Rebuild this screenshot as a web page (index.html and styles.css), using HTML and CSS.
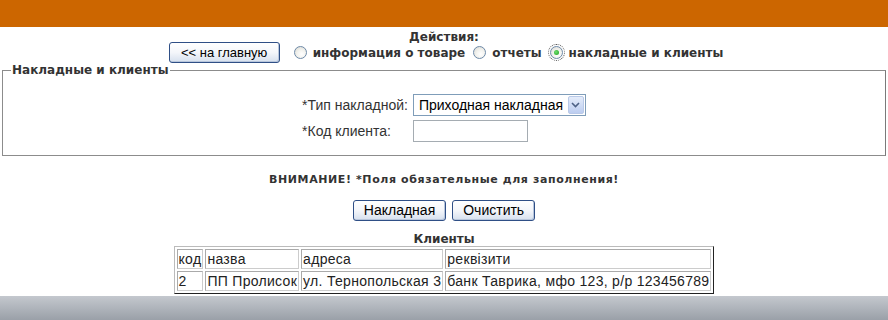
FILE: index.html
```html
<!DOCTYPE html>
<html lang="ru">
<head>
<meta charset="utf-8">
<title>Накладные и клиенты</title>
<link rel="stylesheet" href="styles.css">
</head>
<body>
<div class="page">
  <div class="header"></div>
  <div class="actions">
    <div class="actions-title">Действия:</div>
    <div class="actions-row">
      <button class="btn btn-home" type="button">&lt;&lt; на главную</button>
      <label class="radio-item"><span class="radio"></span>информация о товаре</label>
      <label class="radio-item"><span class="radio"></span>отчеты</label>
      <label class="radio-item"><span class="radio radio-on"></span>накладные и клиенты</label>
    </div>
  </div>
  <fieldset class="box">
    <legend class="box-legend">Накладные и клиенты</legend>
    <div class="form-grid">
      <span class="form-label">*Тип накладной:</span>
      <div class="select-wrap">
        <select class="select">
          <option>Приходная накладная</option>
        </select>
        <span class="select-btn">
          <svg width="9" height="6" viewBox="0 0 9 6"><path d="M1 1 L4.5 4.5 L8 1" fill="none" stroke="#4d6185" stroke-width="1.6"/></svg>
        </span>
      </div>
      <span class="form-label">*Код клиента:</span>
      <div><input class="text-input" type="text"></div>
    </div>
  </fieldset>
  <div class="warning">ВНИМАНИЕ! *Поля обязательные для заполнения!</div>
  <div class="buttons">
    <button class="btn btn-form" type="button">Накладная</button>
    <button class="btn btn-form" type="button">Очистить</button>
  </div>
  <div class="clients">
    <div class="clients-title">Клиенты</div>
    <table class="clients-table">
      <tr><td>код</td><td>назва</td><td>адреса</td><td>реквізити</td></tr>
      <tr><td>2</td><td>ПП Пролисок</td><td>ул. Тернопольская 3</td><td>банк Таврика, мфо 123, р/р 123456789</td></tr>
    </table>
  </div>
  <div class="footer"></div>
</div>
</body>
</html>
```

FILE: styles.css
```css
html, body {
  margin: 0;
  padding: 0;
  background: #fff;
}
body {
  font-family: "DejaVu Sans", Verdana, sans-serif;
  color: #333;
  height: 320px;
  overflow: hidden;
}
.page {
  display: flex;
  flex-direction: column;
  height: 320px;
}
.header {
  height: 27px;
  background: #cc6600;
  flex: none;
}
.actions {
  display: flex;
  flex-direction: column;
  align-items: center;
  padding-top: 4px;
}
.actions-title {
  font-size: 12px;
  font-weight: bold;
  line-height: 13px;
  color: #333;
}
.actions-row {
  display: flex;
  align-items: center;
  margin-top: -2px;
  padding-left: 12px;
}
.btn {
  font-family: "Liberation Sans", Arial, sans-serif;
  font-size: 13px;
  color: #000;
  border: 1px solid #2f4f86;
  border-radius: 3px;
  background: linear-gradient(#ffffff 0%, #f4f6fa 50%, #d6e0ee 100%);
  padding: 0;
  height: 21px;
  line-height: 19px;
  box-shadow: inset -1px -1px 0 #b8c6dc;
}
.btn-home {
  width: 111px;
  margin-right: 14px;
}
.radio-item {
  display: flex;
  align-items: center;
  font-size: 12px;
  font-weight: bold;
  color: #333;
  margin-right: 8px;
}
.radio {
  width: 11px;
  height: 11px;
  border-radius: 50%;
  border: 1px solid #6e8aa8;
  background: radial-gradient(circle at 60% 65%, #ffffff 0%, #f2f2ee 45%, #d6d6d0 100%);
  margin-right: 6px;
  flex: none;
  display: flex;
  align-items: center;
  justify-content: center;
}
.radio-on {
  outline: 1px dotted #555;
  outline-offset: 1px;
}
.radio-on::after {
  content: "";
  width: 5px;
  height: 5px;
  border-radius: 50%;
  background: radial-gradient(circle at 40% 40%, #6ee06e, #1e9e1e);
}
.box {
  margin: 0 2px 0 2px;
  border: 1px solid #8c8c8c;
  border-right-color: #7a7a7a;
  padding: 17px 0 13px 0;
  flex: none;
}
.box-legend {
  font-size: 12px;
  font-weight: bold;
  color: #333;
  padding: 0 1px;
  margin-left: 8px;
}
.form-grid {
  display: grid;
  grid-template-columns: auto auto;
  justify-content: center;
  column-gap: 5px;
  row-gap: 4px;
  font-family: "Liberation Sans", Arial, sans-serif;
  font-size: 14px;
}
.form-label {
  color: #333;
  align-self: center;
  white-space: nowrap;
}
.select-wrap {
  display: flex;
  align-items: stretch;
  height: 20px;
  border: 1px solid #7f9db9;
  width: 171px;
  background: #fff;
}
.select {
  appearance: none;
  -webkit-appearance: none;
  border: 0;
  outline: 0;
  flex: 1;
  font-family: "Liberation Sans", Arial, sans-serif;
  font-size: 14px;
  color: #000;
  padding: 0 0 0 5px;
  background: #fff;
  min-width: 0;
}
.select-btn {
  width: 16px;
  margin: 1px;
  border: 1px solid #b9c9e8;
  border-radius: 2px;
  background: linear-gradient(#e4ecfa, #bccdf0);
  display: flex;
  align-items: center;
  justify-content: center;
  box-sizing: border-box;
}
.text-input {
  width: 115px;
  height: 22px;
  box-sizing: border-box;
  border: 1px solid #a5acb2;
  padding: 0 2px;
  font-family: "Liberation Sans", Arial, sans-serif;
  font-size: 14px;
  display: block;
}
.warning {
  text-align: center;
  font-size: 11px;
  font-weight: bold;
  color: #333;
  margin-top: 17px;
  line-height: 14px;
  letter-spacing: 0.6px;
}
.buttons {
  display: flex;
  justify-content: center;
  gap: 6px;
  margin-top: 13px;
}
.btn-form {
  font-size: 14px;
  padding: 0 10px;
}
.clients {
  display: flex;
  flex-direction: column;
  align-items: center;
  margin-top: 12px;
}
.clients-title {
  font-size: 12px;
  font-weight: bold;
  color: #333;
  line-height: 13px;
}
.clients-table {
  border: 1px solid;
  border-color: #bbb #222 #222 #bbb;
  border-spacing: 2px;
  font-family: "Liberation Sans", Arial, sans-serif;
  font-size: 14px;
  letter-spacing: 0.3px;
  color: #222;
}
.clients-table td {
  border: 1px solid;
  border-color: #aaa #ccc #ccc #aaa;
  padding: 1px 1px;
  line-height: 16px;
  white-space: nowrap;
}
.footer {
  margin-top: 2px;
  flex: 1;
  background: linear-gradient(#c4c8ce, #9aa0a8);
}
```
